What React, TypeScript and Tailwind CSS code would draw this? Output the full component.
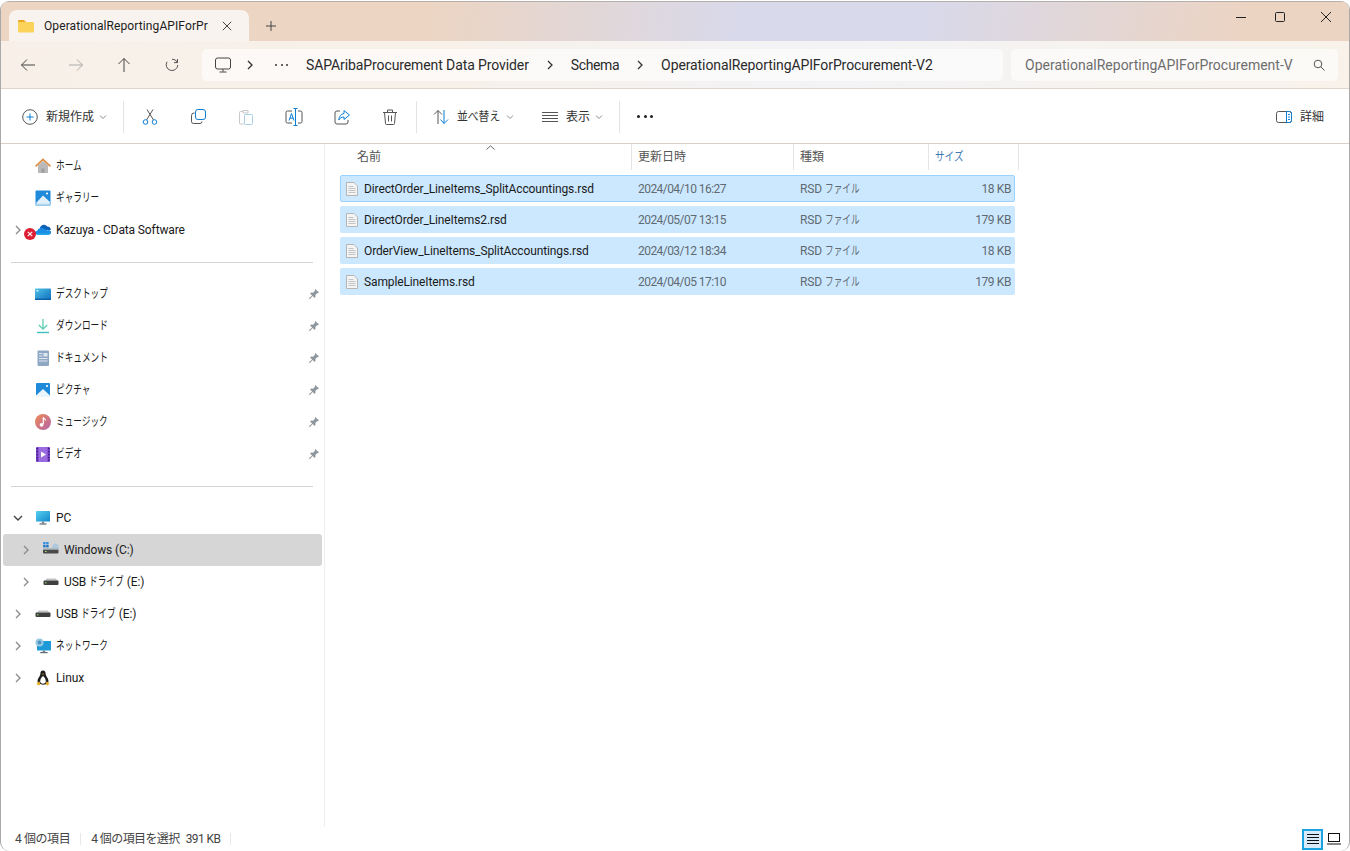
import React from "react";

const B = "#0f7fd6";

function Ic({ w = 16, h = 16, children, vb }: { w?: number; h?: number; children: React.ReactNode; vb?: string }) {
  return (
    <svg width={w} height={h} viewBox={vb ?? `0 0 ${w} ${h}`} fill="none" className="shrink-0 block">
      {children}
    </svg>
  );
}

/* Katakana in the reference is set in a narrow UI face, so it is condensed here */
function K({ children, w }: { children: React.ReactNode; w: string }) {
  return (
    <span className={`inline-block align-baseline whitespace-nowrap ${w}`}>
      <span className="inline-block origin-left scale-x-[0.72] tracking-[0px]">{children}</span>
    </span>
  );
}

const Chevron = ({ down, c = "#8a8a8a" }: { down?: boolean; c?: string }) => (
  <Ic w={10} h={10}>
    {down ? <path d="M1 3l4 4 4-4" stroke="#444" strokeWidth="1.4" /> : <path d="M3 1l4 4-4 4" stroke={c} strokeWidth="1.3" />}
  </Ic>
);
const SmallDown = () => (
  <Ic w={8} h={8}>
    <path d="M1 2.5l3 3 3-3" stroke="#8c8c8c" strokeWidth="1" />
  </Ic>
);
const Pin = () => (
  <Ic w={12} h={12}>
    <path d="M7.4 1l3.6 3.6-1 .7-.6-.2-2 2 .1 2-.9.9-2-2-2.6 2.9-.9.1.1-.9 2.9-2.6-2-2 .9-.9 2 .1 2-2-.2-.6z" fill="#8f979e" />
  </Ic>
);

const Home = () => (
  <Ic>
    <path d="M3 7.5V15h10V7.5L8 3z" fill="#b9b9b9" />
    <path d="M6.4 15v-4.5h3.2V15z" fill="#a0a0a0" />
    <path d="M.6 8.4L8 1.4l7.4 7" stroke="#dd8f45" strokeWidth="1.8" />
  </Ic>
);
const Gallery = () => (
  <Ic>
    <rect x="0.5" y="0.5" width="15" height="15" rx="1" fill="#1f8ad9" />
    <rect x="0.5" y="13" width="15" height="2.5" fill="#9fcdec" />
    <path d="M1 13l7-7.5 7 6.5V13z" fill="#dff0fa" />
    <path d="M2 13.8h12" stroke="#eaf5fc" />
    <circle cx="12" cy="3.5" r="1.1" fill="#fff" />
  </Ic>
);
const Picture = () => (
  <Ic>
    <rect x="1" y="1" width="14" height="14" rx="1" fill="#1f8ad9" />
    <path d="M1 13.5l7-6.5 7 6.5V15H1z" fill="#eaf5fc" />
    <circle cx="12" cy="4" r="1.1" fill="#fff" />
  </Ic>
);
const Cloud = () => (
  <Ic>
    <path d="M5 5.5a4 4 0 017.2-1 3.3 3.3 0 013.6 3.6H5z" fill="#0a62b8" />
    <path d="M0 12a2.7 2.7 0 012.3-3.2A4 4 0 019 7a3 3 0 013.2 1.5A2.4 2.4 0 0116 11l-.5 1z" fill="#1a8ce2" />
    <path d="M.4 11.6h15.3a2.2 2.2 0 01-2 1.4H2.4a2.4 2.4 0 01-2-1.4z" fill="#28a8ea" />
  </Ic>
);
const Desktop = () => (
  <Ic>
    <defs>
      <linearGradient id="dg" x1="0" y1="0" x2="1" y2="1">
        <stop offset="0" stopColor="#4fc0e6" />
        <stop offset="1" stopColor="#0f6fbf" />
      </linearGradient>
    </defs>
    <rect x="0" y="2.5" width="16" height="11.5" rx="1" fill="url(#dg)" />
    <rect x="0" y="12.6" width="16" height="1.4" fill="#0d5ea8" />
    <rect x="1.5" y="4" width="2" height="1.5" fill="#c8eef8" />
  </Ic>
);
const Download = () => (
  <Ic>
    <path d="M8 1v10M3.8 7L8 11.2 12.2 7" stroke="#5ccdb4" strokeWidth="1.3" />
    <path d="M2 14.5h12" stroke="#3fc0c0" strokeWidth="1.4" />
  </Ic>
);
const Doc = () => (
  <Ic>
    <rect x="2.5" y="0.5" width="11.5" height="15.5" rx="1" fill="#8ea7c2" />
    <rect x="4" y="3" width="3.5" height="1" fill="#dfe7ef" />
    <rect x="4" y="5.5" width="3.5" height="1" fill="#dfe7ef" />
    <rect x="8.5" y="3" width="4" height="3.5" fill="#dfe7ef" />
    <rect x="4" y="8" width="8.5" height="1" fill="#dfe7ef" />
    <rect x="4" y="10.5" width="8.5" height="1" fill="#dfe7ef" />
  </Ic>
);
const Music = () => (
  <Ic>
    <defs>
      <linearGradient id="mg" x1="0" y1="0" x2="1" y2="1">
        <stop offset="0" stopColor="#ee8a55" />
        <stop offset="1" stopColor="#b463a8" />
      </linearGradient>
    </defs>
    <circle cx="8" cy="8" r="8" fill="url(#mg)" />
    <path d="M8.3 3.5v6.5" stroke="#fff" strokeWidth="1.2" />
    <path d="M8.3 3.5c.6 1.6 2.3 1.5 2.4 3" stroke="#fff" strokeWidth="1.1" />
    <circle cx="6.6" cy="10.8" r="1.9" fill="#fff" />
  </Ic>
);
const Video = () => (
  <Ic>
    <rect x="1" y="1" width="14" height="15" rx="1" fill="#7a3fc8" />
    <rect x="3.5" y="1" width="9" height="15" fill="#9a6be0" />
    <path d="M6 5.5l5 3-5 3z" fill="#fff" />
    {[2.5, 5.5, 8.5, 11.5, 14].map((y) => (
      <React.Fragment key={y}>
        <rect x="1.6" y={y - 0.5} width="1.2" height="1.2" fill="#2c1a66" />
        <rect x="13.2" y={y - 0.5} width="1.2" height="1.2" fill="#2c1a66" />
      </React.Fragment>
    ))}
  </Ic>
);
const Monitor = () => (
  <Ic>
    <defs>
      <linearGradient id="pg" x1="0" y1="0" x2="1" y2="1">
        <stop offset="0" stopColor="#55d0ee" />
        <stop offset="1" stopColor="#1488cc" />
      </linearGradient>
    </defs>
    <rect x="1" y="1" width="14" height="10.5" rx="0.6" fill="url(#pg)" />
    <rect x="6.8" y="11.5" width="2.4" height="2" fill="#7b8790" />
    <rect x="4.5" y="13.4" width="7" height="1.2" fill="#5f6a72" />
  </Ic>
);
const WinDrive = () => (
  <Ic>
    <rect x="0.2" y="0" width="2.4" height="2.4" fill="#2e90e0" />
    <rect x="3.2" y="0" width="2.4" height="2.4" fill="#2e90e0" />
    <rect x="0.2" y="3" width="2.4" height="2.4" fill="#1f75c5" />
    <rect x="3.2" y="3" width="2.4" height="2.4" fill="#1f75c5" />
    <path d="M8 6.5h7.5V3.6L13.5 1.5H11z" fill="#aec9dd" />
    <rect x="0" y="7" width="15.5" height="4.5" rx="1" fill="#4a4a4a" />
    <rect x="0" y="6.2" width="15.5" height="1.6" fill="#a9b3ba" />
    <rect x="2" y="9" width="1.6" height="1" fill="#9fe06a" />
  </Ic>
);
const Drive = () => (
  <Ic>
    <path d="M2 6.5L3.6 4.5h8.8L15 6.5z" fill="#c2c2c2" />
    <rect x="0.5" y="6.5" width="15" height="4.5" rx="1" fill="#3f3f3f" />
    <rect x="2" y="8.3" width="1.6" height="1" fill="#9fe06a" />
  </Ic>
);
const Net = () => (
  <Ic>
    <rect x="2" y="3" width="14" height="9.5" fill="#1e9ad8" />
    <rect x="7.6" y="12.5" width="2.6" height="1.6" fill="#7b8790" />
    <rect x="5.2" y="14" width="7.4" height="1.2" fill="#5f6a72" />
    <circle cx="4.5" cy="4.5" r="4" fill="#9ac9e3" />
    <circle cx="4.5" cy="4.5" r="2" fill="#4d96c4" />
  </Ic>
);
const Tux = () => (
  <Ic>
    <path d="M8 .5c-2 0-2.6 1.6-2.6 3.4 0 2-2.9 4.2-2.9 7.2 0 2 2.4 3.7 5.5 3.7s5.5-1.7 5.5-3.7c0-3-2.9-5.2-2.9-7.2C10.6 2.1 10 .5 8 .5z" fill="#1d1d1d" />
    <path d="M8 6c-1.6 1-2.8 3-2.8 5.3 0 1.4 1.2 2.4 2.8 2.4s2.8-1 2.8-2.4C10.8 9 9.6 7 8 6z" fill="#fff" />
    <path d="M1.5 13l3-1.5 1 3-2.5 1zM14.5 13l-3-1.5-1 3 2.5 1z" fill="#e8ad26" />
    <path d="M7 3.8h2L8 5z" fill="#e8ad26" />
  </Ic>
);

type Row =
  | { t: React.ReactNode; icon?: React.ReactNode; chev?: "r" | "d"; lvl?: number; pin?: boolean; sel?: boolean; badge?: boolean }
  | "sep";
const usb = (
  <>
    USB <K w="w-[35px]">ドライブ</K> (E:)
  </>
);
const rows: Row[] = [
  { t: <K w="w-[30px]">ホーム</K>, icon: <Home /> },
  { t: <K w="w-[44px]">ギャラリー</K>, icon: <Gallery /> },
  { t: "Kazuya - CData Software", icon: <Cloud />, chev: "r", badge: true },
  "sep",
  { t: <K w="w-[54px]">デスクトップ</K>, icon: <Desktop />, pin: true },
  { t: <K w="w-[54px]">ダウンロード</K>, icon: <Download />, pin: true },
  { t: <K w="w-[52px]">ドキュメント</K>, icon: <Doc />, pin: true },
  { t: <K w="w-[36px]">ピクチャ</K>, icon: <Picture />, pin: true },
  { t: <K w="w-[52px]">ミュージック</K>, icon: <Music />, pin: true },
  { t: <K w="w-[27px]">ビデオ</K>, icon: <Video />, pin: true },
  "sep",
  { t: "PC", icon: <Monitor />, chev: "d" },
  { t: "Windows (C:)", icon: <WinDrive />, chev: "r", lvl: 1, sel: true },
  { t: usb, icon: <Drive />, chev: "r", lvl: 1 },
  { t: usb, icon: <Drive />, chev: "r" },
  { t: <K w="w-[52px]">ネットワーク</K>, icon: <Net />, chev: "r" },
  { t: "Linux", icon: <Tux />, chev: "r" },
];

const files = [
  ["DirectOrder_LineItems_SplitAccountings.rsd", "2024/04/10 16:27", "18 KB"],
  ["DirectOrder_LineItems2.rsd", "2024/05/07 13:15", "179 KB"],
  ["OrderView_LineItems_SplitAccountings.rsd", "2024/03/12 18:34", "18 KB"],
  ["SampleLineItems.rsd", "2024/04/05 17:10", "179 KB"],
];

const FileIcon = () => (
  <Ic w={12} h={14}>
    <path d="M.5.5h7.5l3.5 3.5v9.5H.5z" fill="#f4f4f4" stroke="#b5b5b5" />
    <path d="M2.5 4.5h5M2.5 6.5h7M2.5 8.5h7M2.5 10.5h7" stroke="#c4c4c4" />
  </Ic>
);

function Tool({ children }: { children: React.ReactNode }) {
  return <div className="w-[48px] flex items-center justify-center">{children}</div>;
}
const Sep = () => <div className="w-px h-[32px] bg-[#e4e4e4]" />;

export default function App() {
  return (
    <div className="w-[1350px] h-[851px] overflow-hidden bg-white pt-px font-['Roboto','Noto_Sans_CJK_JP',sans-serif] text-[12px] tracking-[-0.12px] text-[#1a1a1a]">
      <div className="h-[850px] flex flex-col rounded-[9px] border-l border-r border-[#a9a9a9] overflow-hidden bg-white">
        {/* Title bar */}
        <div className="h-[40px] shrink-0 flex items-end pl-[8px] bg-[linear-gradient(100deg,#ecd5c3_0%,#ecd5c3_32%,#d8d9eb_55%,#d8d9eb_68%,#ecd4c3_92%)] border-t border-[#b5b0ab]">
          <div className="w-[240px] h-[31px] rounded-t-[8px] bg-[#f8f3ee] flex items-center pl-[9px]">
            <Ic w={16} h={14}>
              <path d="M0 2a1 1 0 011-1h5l2 2H0z" fill="#e9a820" />
              <rect x="0" y="3" width="16" height="10.5" rx="1" fill="#fbd35b" />
            </Ic>
            <div className="ml-[10px] w-[164px] overflow-hidden whitespace-nowrap tracking-[0.1px] text-[#1c1c1c]">OperationalReportingAPIForProcurement-V2</div>
            <div className="ml-[14px]">
              <Ic w={10} h={10}>
                <path d="M.8.8l8.4 8.4M9.2.8L.8 9.2" stroke="#444" strokeWidth="1" />
              </Ic>
            </div>
          </div>
          <div className="ml-[17px] mb-[10px]">
            <Ic w={10} h={10}>
              <path d="M5 0v10M0 5h10" stroke="#444" strokeWidth="1" />
            </Ic>
          </div>
          <div className="ml-auto self-start mt-[10px] flex items-center pr-[18px]">
            <Ic w={10} h={10}>
              <path d="M0 5.5h10" stroke="#222" strokeWidth="1" />
            </Ic>
            <div className="ml-[29px]">
              <Ic w={10} h={10}>
                <rect x=".5" y=".5" width="9" height="9" rx="1" stroke="#222" />
              </Ic>
            </div>
            <div className="ml-[36px]">
              <Ic w={10} h={10}>
                <path d="M0 0l10 10M10 0L0 10" stroke="#222" strokeWidth="1" />
              </Ic>
            </div>
          </div>
        </div>

        {/* Address bar */}
        <div className="h-[48px] shrink-0 flex items-center pt-px border-b border-[#e0d5cc] bg-[linear-gradient(100deg,#f8f0e8_0%,#f7f1ea_35%,#f3f3f6_60%,#f6f3f0_80%,#f8f2ea_100%)]">
          <div className="flex items-center w-[200px] pl-[3px]">
            {[
              ["M15 8H1.5M7 2.5L1.5 8 7 13.5", "#444"],
              ["M1 8h13.5M9 2.5L14.5 8 9 13.5", "#aaa"],
              ["M8 15V1.5M2.5 7L8 1.5 13.5 7", "#444"],
            ].map(([d, c]) => (
              <div key={d} className="w-[48px] flex justify-center">
                <Ic>
                  <path d={d} stroke={c} strokeWidth="1" />
                </Ic>
              </div>
            ))}
            <div className="w-[48px] flex justify-center">
              <Ic w={14} h={14}>
                <path d="M12.8 7A5.8 5.8 0 112 3.8M12.5 1v3.6H9M12.5 4.6A5.8 5.8 0 007 1.2" stroke="#555" strokeWidth="1" />
              </Ic>
            </div>
          </div>
          <div className="w-[801px] h-[32px] rounded-[5px] bg-white/60 flex items-center text-[14px] tracking-[-0.1px] text-[#2a2a2a] ml-px">
            <div className="ml-[13px]">
              <Ic>
                <rect x=".5" y="1" width="15" height="11" rx="2" stroke="#444" />
                <path d="M8 12v2.5M4.5 15h7" stroke="#444" />
              </Ic>
            </div>
            <div className="ml-[14px]">
              <Chevron c="#333" />
            </div>
            <div className="ml-[20px] w-[13px] flex justify-between">
              <span className="w-[2px] h-[2px] rounded-full bg-[#333]" />
              <span className="w-[2px] h-[2px] rounded-full bg-[#333]" />
              <span className="w-[2px] h-[2px] rounded-full bg-[#333]" />
            </div>
            <span className="ml-[18px]">SAPAribaProcurement Data Provider</span>
            <div className="ml-[16px]">
              <Chevron c="#333" />
            </div>
            <span className="ml-[16px] tracking-[-0.4px]">Schema</span>
            <div className="ml-[16px]">
              <Chevron c="#333" />
            </div>
            <span className="ml-[16px]">OperationalReportingAPIForProcurement-V2</span>
          </div>
          <div className="ml-[8px] w-[327px] h-[32px] rounded-[5px] bg-white/60 flex items-center pl-[14px] text-[14px] tracking-[0px] text-[#6e6e6e]">
            <div className="overflow-hidden whitespace-nowrap w-[268px]">OperationalReportingAPIForProcurement-V2</div>
            <div className="ml-[20px]">
              <Ic w={12} h={12}>
                <circle cx="5" cy="5" r="3.8" stroke="#555" />
                <path d="M7.8 7.8L11.5 11.5" stroke="#555" />
              </Ic>
            </div>
          </div>
        </div>

        {/* Toolbar */}
        <div className="h-[55px] shrink-0 flex items-center pt-px border-b border-[#d9cfc6] pl-[21px] pr-[25px] text-[#333]">
          <Ic>
            <circle cx="8" cy="8" r="7.3" stroke="#555" />
            <path d="M8 4.5v7M4.5 8h7" stroke={B} />
          </Ic>
          <span className="ml-[8px] w-[48px] whitespace-nowrap tracking-[0px]">新規作成</span>
          <div className="ml-[5px]">
            <SmallDown />
          </div>
          <div className="ml-[16px] mr-[2px]">
            <Sep />
          </div>
          <Tool>
            <Ic>
              <path d="M4.5 11L11 .5M11.5 11L5 .5" stroke="#555" />
              <circle cx="3.5" cy="13" r="2.3" stroke={B} />
              <circle cx="12.5" cy="13" r="2.3" stroke={B} />
            </Ic>
          </Tool>
          <Tool>
            <Ic w={15} h={15}>
              <rect x="4.5" y=".5" width="10" height="10" rx="2.5" stroke={B} />
              <path d="M3.5 4H3a2.5 2.5 0 00-2.5 2.5v6A2 2 0 002.5 14.5H9a2 2 0 002-2" stroke="#555" />
            </Ic>
          </Tool>
          <Tool>
            <Ic w={14} h={16}>
              <path d="M4 2.5H1.5a1 1 0 00-1 1V14a1 1 0 001 1H5" stroke="#c8c8c8" />
              <path d="M4 1.5h5v2.5H4z" stroke="#c8c8c8" />
              <rect x="5.5" y="5.5" width="8" height="10" rx="1" stroke="#a6cfea" />
            </Ic>
          </Tool>
          <Tool>
            <Ic w={18} h={18}>
              <path d="M7 3H2.5A1.5 1.5 0 001 4.5v9A1.5 1.5 0 002.5 15H7M13 3h2.5A1.5 1.5 0 0117 4.5v9a1.5 1.5 0 01-1.5 1.5H13" stroke="#555" />
              <path d="M10.5.5v17M8.5.5h4M8.5 17.5h4" stroke={B} />
              <path d="M4 12.5L6.5 5.5 9 12.5M4.8 10.2h3.6" stroke={B} />
            </Ic>
          </Tool>
          <Tool>
            <Ic>
              <path d="M6 2H3a2 2 0 00-2 2v9a2 2 0 002 2h9a2 2 0 002-2v-2" stroke="#555" />
              <path d="M10 1.5L15.5 6 10 10.5V8C7.5 8 6 9 4.8 11 5 7.5 7 5 10 4.5z" stroke={B} />
            </Ic>
          </Tool>
          <Tool>
            <Ic>
              <path d="M1 3.5h14M5.5 3.5V1h5v2.5M2.5 3.5l1 11a1 1 0 001 1h7a1 1 0 001-1l1-11M6.5 6.5v6M9.5 6.5v6" stroke="#555" />
            </Ic>
          </Tool>
          <div className="ml-[2px]">
            <Sep />
          </div>
          <div className="ml-[16px]">
            <Ic>
              <path d="M5 15V1.5M1 5.5l4-4 4 4" stroke="#555" />
              <path d="M11 1v13.5M7.5 10.5l3.5 4 4-4" stroke={B} />
            </Ic>
          </div>
          <span className="ml-[8px] w-[44px] whitespace-nowrap tracking-[0px]">
            <span className="inline-block origin-left scale-x-[0.9]">並べ替え</span>
          </span>
          <div className="ml-[5px]">
            <SmallDown />
          </div>
          <div className="ml-[28px]">
            <Ic w={16} h={10}>
              <path d="M0 .5h16M0 3.5h16M0 6.5h16M0 9.5h16" stroke="#555" />
            </Ic>
          </div>
          <span className="ml-[8px] w-[24px] whitespace-nowrap tracking-[0px]">表示</span>
          <div className="ml-[5px]">
            <SmallDown />
          </div>
          <div className="ml-[16px]">
            <Sep />
          </div>
          <div className="ml-[17px] w-[16px] flex justify-between">
            <span className="w-[3px] h-[3px] rounded-full bg-[#222]" />
            <span className="w-[3px] h-[3px] rounded-full bg-[#222]" />
            <span className="w-[3px] h-[3px] rounded-full bg-[#222]" />
          </div>
          <div className="ml-auto flex items-center">
            <Ic w={16} h={12}>
              <rect x=".5" y=".5" width="15" height="11" rx="2" stroke="#555" />
              <path d="M10.5 .5h3a2 2 0 012 2v7a2 2 0 01-2 2h-3z" stroke={B} />
              <path d="M12 3.5h2M12 6h2M12 8.5h2" stroke={B} />
            </Ic>
            <span className="ml-[8px] tracking-[0px]">詳細</span>
          </div>
        </div>

        {/* Body */}
        <div className="flex-1 flex min-h-0">
          <div className="w-[324px] shrink-0 border-r border-[#eeeeee] pt-[6px] pl-[2px] pr-[2px]">
            {rows.map((r, i) =>
              r === "sep" ? (
                <div key={i} className="h-[32px] flex items-center pl-[8px] pr-[9px]">
                  <div className="h-px w-full bg-[#d4d4d4]" />
                </div>
              ) : (
                <div key={i} className={`h-[32px] flex items-center rounded-[3px] relative ${r.sel ? "bg-[#d6d6d6]" : ""}`}>
                  <div className={r.lvl ? "w-[40px] pl-[18px]" : "w-[32px] pl-[10px]"}>{r.chev && <Chevron down={r.chev === "d"} />}</div>
                  {r.icon}
                  <span className="ml-[5px] whitespace-nowrap">{r.t}</span>
                  {r.badge && (
                    <div className="absolute left-[21px] top-[14px] w-[12px] h-[12px] rounded-full bg-[#dc1f35] flex items-center justify-center">
                      <Ic w={6} h={6}>
                        <path d="M.8.8l4.4 4.4M5.2.8L.8 5.2" stroke="#fff" strokeWidth="1.1" />
                      </Ic>
                    </div>
                  )}
                  {r.pin && (
                    <div className="ml-auto mr-[2px]">
                      <Pin />
                    </div>
                  )}
                </div>
              )
            )}
          </div>

          <div className="flex-1 min-w-0">
            <div className="h-[26px] flex relative text-[#555] tracking-[0px]">
              <div className="w-[307px] pl-[32px] flex items-center border-r border-[#e5e5e5]">名前</div>
              <div className="w-[162px] pl-[6px] flex items-center border-r border-[#e5e5e5]">更新日時</div>
              <div className="w-[135px] pl-[6px] flex items-center border-r border-[#e5e5e5]">種類</div>
              <div className="w-[90px] pl-[6px] flex items-center border-r border-[#e5e5e5] text-[#3f7ab0]">
                <span className="inline-block origin-left scale-x-[0.8]">サイズ</span>
              </div>
              <div className="absolute left-[161px] top-[1px]">
                <Ic w={9} h={5}>
                  <path d="M.5 4.5L4.5.8l4 3.7" stroke="#666" strokeWidth="1" />
                </Ic>
              </div>
            </div>
            <div className="flex flex-col gap-[4px] pt-[5px] pl-[15px]">
              {files.map((f, i) => (
                <div key={f[0]} className={`w-[675px] h-[27px] flex items-center rounded-[2px] bg-[#cce8ff] ${i === 0 ? "border border-[#99d1ff]" : ""}`}>
                  <div className={i === 0 ? "ml-[5px]" : "ml-[6px]"}>
                    <FileIcon />
                  </div>
                  <span className="ml-[6px] w-[274px] whitespace-nowrap">{f[0]}</span>
                  <span className="w-[162px] text-[#5f6a72] tracking-[-0.55px]">{f[1]}</span>
                  <span className="w-[100px] text-[#5f6a72] whitespace-nowrap">
                    RSD <K w="w-[36px]">ファイル</K>
                  </span>
                  <span className={`flex-1 text-right text-[#5f6a72] tracking-[-0.4px] ${i === 0 ? "pr-[3px]" : "pr-[4px]"}`}>{f[2]}</span>
                </div>
              ))}
            </div>
          </div>
        </div>

        {/* Status */}
        <div className="h-[24px] shrink-0 flex items-center pl-[14px] text-[#444]">
          <span className="whitespace-nowrap tracking-[-0.4px]">4 個の項目</span>
          <div className="ml-[10px] w-px h-[12px] bg-[#e8e8e8]" />
          <span className="ml-[10px] whitespace-nowrap tracking-[-0.6px]">4 個の項目を選択</span>
          <span className="ml-[6px] whitespace-nowrap tracking-[-0.6px]">391 KB</span>
          <div className="ml-[10px] w-px h-[12px] bg-[#e8e8e8]" />
          <div className="ml-auto w-[21px] h-[21px] border-2 border-[#1aa3e0] bg-[#d8eaf7] flex items-center justify-center">
            <Ic w={12} h={12}>
              <path d="M0 1.5h12M0 4.5h12M0 7.5h12M0 10.5h12" stroke="#111" strokeWidth="1.1" />
            </Ic>
          </div>
          <div className="mr-[8px] ml-[4px]">
            <Ic w={14} h={12}>
              <rect x="1.5" y=".5" width="11" height="8" stroke="#111" />
              <path d="M0 11h14" stroke="#111" />
            </Ic>
          </div>
        </div>
      </div>
    </div>
  );
}
